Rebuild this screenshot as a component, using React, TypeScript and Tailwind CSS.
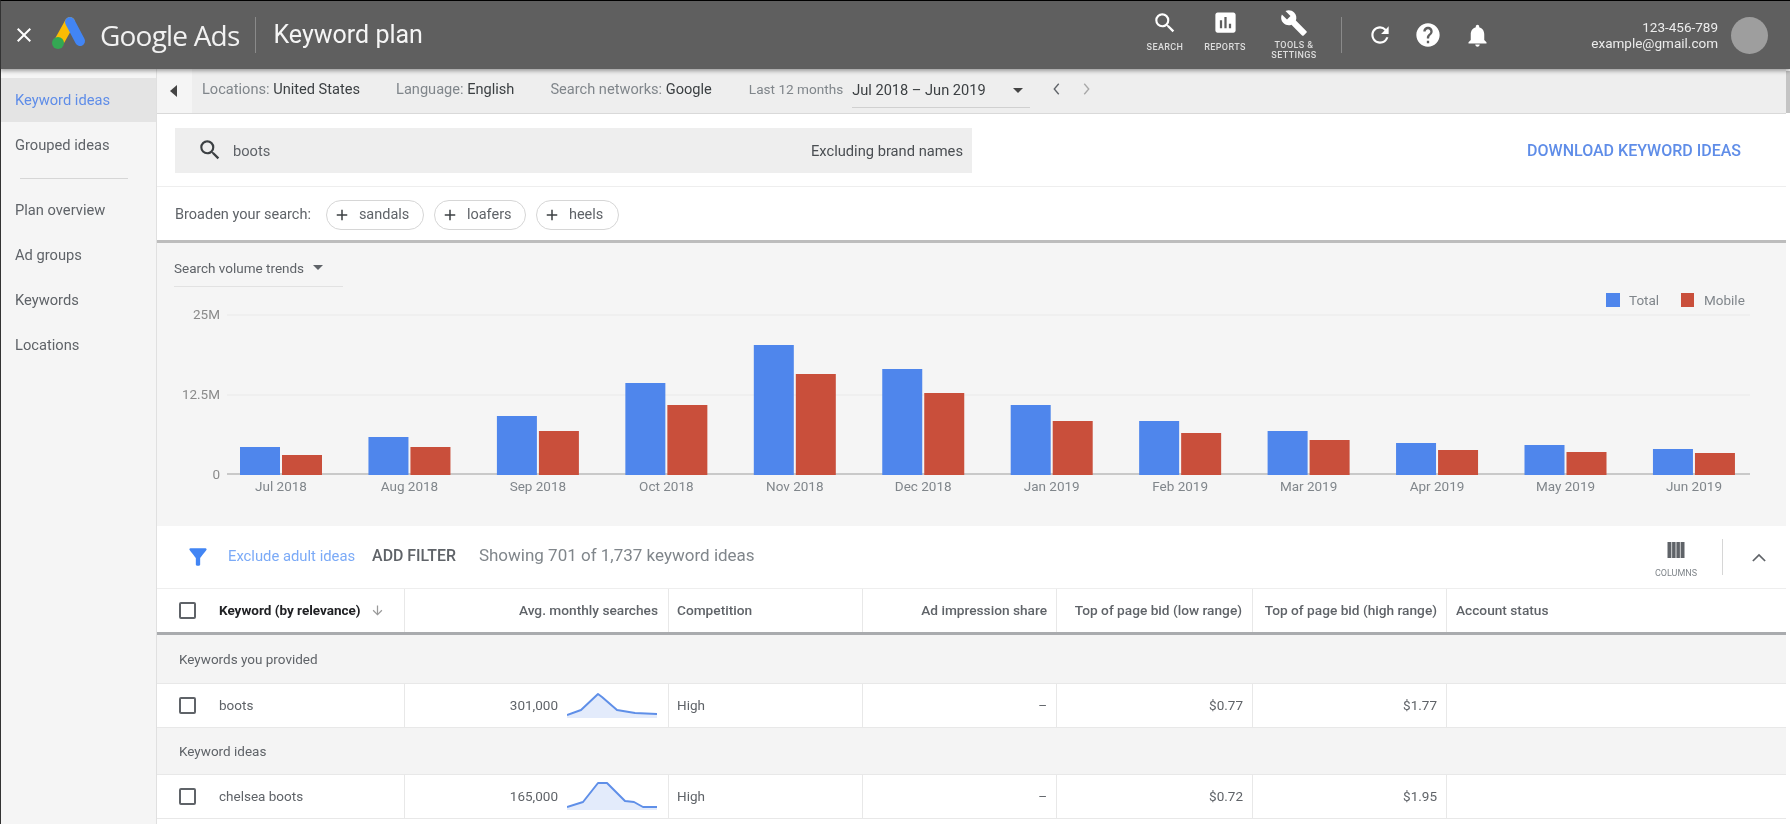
import { ReactNode } from 'react'

const blue = [447, 437, 416, 383, 345, 369, 405, 421, 431, 443, 445, 449]
const red = [455, 447, 431, 405, 374, 393, 421, 433, 440, 450, 452, 453]
const months = ['Jul 2018', 'Aug 2018', 'Sep 2018', 'Oct 2018', 'Nov 2018', 'Dec 2018', 'Jan 2019', 'Feb 2019', 'Mar 2019', 'Apr 2019', 'May 2019', 'Jun 2019']

const paths = {
  search: 'M15.5 14h-.79l-.28-.27A6.471 6.471 0 0 0 16 9.5 6.5 6.5 0 1 0 9.5 16c1.61 0 3.09-.59 4.23-1.57l.27.28v.79l5 4.99L20.49 19l-4.99-5zm-6 0C7.01 14 5 11.99 5 9.5S7.01 5 9.5 5 14 7.01 14 9.5 11.99 14 9.5 14z',
  reports: 'M19 3H5c-1.1 0-2 .9-2 2v14c0 1.1.9 2 2 2h14c1.1 0 2-.9 2-2V5c0-1.1-.9-2-2-2zM9 17H7v-7h2v7zm4 0h-2V7h2v10zm4 0h-2v-4h2v4z',
  tools: 'M22.7 19l-9.1-9.1c.9-2.3.4-5-1.5-6.9-2-2-5-2.4-7.4-1.3L9 6 6 9 1.6 4.7C.4 7.1.9 10.1 2.9 12.1c1.9 1.9 4.6 2.4 6.9 1.5l9.1 9.1c.4.4 1 .4 1.4 0l2.3-2.3c.5-.4.5-1.1.1-1.4z',
  refresh: 'M17.65 6.35A7.958 7.958 0 0 0 12 4c-4.42 0-7.99 3.58-7.99 8s3.57 8 7.99 8c3.73 0 6.84-2.55 7.73-6h-2.08A5.99 5.99 0 0 1 12 18c-3.31 0-6-2.69-6-6s2.69-6 6-6c1.66 0 3.14.69 4.22 1.78L13 11h7V4l-2.35 2.35z',
  help: 'M12 2C6.48 2 2 6.48 2 12s4.48 10 10 10 10-4.48 10-10S17.52 2 12 2zm1 17h-2v-2h2v2zm2.07-7.75l-.9.92C13.45 12.9 13 13.5 13 15h-2v-.5c0-1.1.45-2.1 1.17-2.83l1.24-1.26c.37-.36.59-.86.59-1.41 0-1.1-.9-2-2-2s-2 .9-2 2H8c0-2.21 1.79-4 4-4s4 1.79 4 4c0 .88-.36 1.68-.93 2.25z',
  bell: 'M12 22c1.1 0 2-.9 2-2h-4c0 1.1.89 2 2 2zm6-6v-5c0-3.07-1.64-5.64-4.5-6.32V4c0-.83-.67-1.5-1.5-1.5s-1.5.67-1.5 1.5v.68C7.63 5.36 6 7.92 6 11v5l-2 2v1h16v-1l-2-2z',
  funnel: 'M4.25 5.61C6.27 8.2 10 13 10 13v6c0 .55.45 1 1 1h2c.55 0 1-.45 1-1v-6s3.72-4.8 5.74-7.39A.998.998 0 0 0 18.95 4H5.04c-.83 0-1.3.95-.79 1.61z',
  plus: 'M19 13h-6v6h-2v-6H5v-2h6V5h2v6h6v2z',
  close: 'M19 6.41 17.59 5 12 10.59 6.41 5 5 6.41 10.59 12 5 17.59 6.41 19 12 13.41 17.59 19 19 17.59 13.41 12z',
  columns: 'M3.5 4h3.9v16H3.5zM8.1 4h3.5v16H8.1zM12.4 4h3.5v16h-3.5zM16.6 4h3.9v16h-3.9z',
  down: 'M11 4h2v12.2l5.3-5.3 1.4 1.4-7.7 7.7-7.7-7.7 1.4-1.4 5.3 5.3z',
}

function Icon({ d, className }: { d: keyof typeof paths; className: string }) {
  return (
    <svg viewBox="0 0 24 24" fill="currentColor" className={className}>
      <path d={paths[d]} />
    </svg>
  )
}

function NavAction({ icon, size, label, width, gap }: { icon: keyof typeof paths; size: string; label: ReactNode; width: string; gap: string }) {
  return (
    <div className={`flex h-[60px] flex-col items-center pt-[4px] ${width}`}>
      <div className="flex h-[27px] items-center justify-center">
        <Icon d={icon} className={`${size} text-white`} />
      </div>
      <div className={`text-center text-[9px] leading-[10px] font-medium tracking-[0.4px] text-[#dddddd] uppercase ${gap}`}>{label}</div>
    </div>
  )
}

function Header() {
  return (
    <header className="relative z-20 flex h-[69px] shrink-0 items-center border-t border-l border-t-black border-l-[#333333] bg-[#5f5f5f] shadow-[0_2px_4px_rgba(0,0,0,0.35)]">
      <Icon d="close" className="ml-[11px] h-[24px] w-[24px] text-white" />
      <svg viewBox="0 0 40 40" className="ml-[12px] h-[40px] w-[40px]">
        <line x1="22" y1="7" x2="12" y2="25" stroke="#fbbc04" strokeWidth="10" strokeLinecap="round" />
        <circle cx="10" cy="28" r="6" fill="#34a853" />
        <line x1="22" y1="7" x2="32" y2="26" stroke="#4285f4" strokeWidth="10" strokeLinecap="round" />
      </svg>
      <span className="ml-[12px] font-['Open_Sans'] text-[28px] tracking-[-0.8px] text-[#f1f1f1]">Google Ads</span>
      <div className="mr-[18px] ml-[15px] h-[36px] w-px bg-[#8a8a8a]" />
      <span className="font-['Roboto'] text-[25px] text-[#f5f5f5]">Keyword plan</span>

      <div className="ml-auto flex items-center">
        <NavAction icon="search" size="h-[26px] w-[26px]" label="Search" width="w-[60px]" gap="mt-[6px]" />
        <NavAction icon="reports" size="h-[27px] w-[27px]" label="Reports" width="w-[60px]" gap="mt-[6px]" />
        <NavAction icon="tools" size="h-[28px] w-[28px]" label={<>Tools &<br />Settings</>} width="w-[78px]" gap="mt-[4px]" />
        <div className="ml-[8px] h-[36px] w-px bg-[#8a8a8a]" />
        <Icon d="refresh" className="ml-[25px] h-[26px] w-[26px] text-white" />
        <Icon d="help" className="ml-[21px] h-[28px] w-[28px] text-white" />
        <Icon d="bell" className="ml-[22px] h-[27px] w-[27px] text-white" />
        <div className="ml-[81px] w-[146px] text-right text-[13.5px] leading-[16px] text-[#ececec]">
          <div>123-456-789</div>
          <div>example@gmail.com</div>
        </div>
        <div className="mr-[22px] ml-[13px] h-[37px] w-[37px] rounded-full bg-[#9e9e9e]" />
      </div>
    </header>
  )
}

function Sidebar() {
  return (
    <aside className="w-[156px] shrink-0 border-l border-l-[#333333] bg-[#f5f5f5] pt-[9px] text-[14.7px] text-[#5f6368]">
      <div className="flex h-[44px] items-center bg-[#e4e4e4] pl-[14px] text-[#5f8de8]">Keyword ideas</div>
      <div className="flex h-[46px] items-center pl-[14px]">Grouped ideas</div>
      <div className="mt-[10px] mr-[28px] mb-[9px] ml-[19px] h-px bg-[#d6d6d6]" />
      <div className="flex h-[45px] items-center pl-[14px]">Plan overview</div>
      <div className="flex h-[45px] items-center pl-[14px]">Ad groups</div>
      <div className="flex h-[45px] items-center pl-[14px]">Keywords</div>
      <div className="flex h-[45px] items-center pl-[14px]">Locations</div>
    </aside>
  )
}

function Label({ name, value }: { name: string; value: string }) {
  return (
    <span className="text-[#80868b]">
      {name} <span className="text-[#3c4043]">{value}</span>
    </span>
  )
}

function SubBar() {
  return (
    <div className="flex h-[45px] items-center border-b border-[#d9d9d9] bg-[#eeeeee] text-[14.6px]">
      <div className="flex h-full w-[35px] items-center justify-center bg-[#f5f5f5] pr-[2px]">
        <div className="h-0 w-0 border-y-[6px] border-r-[7px] border-y-transparent border-r-[#444444]" />
      </div>
      <div className="ml-[10px] flex items-center gap-[36px] pb-[3px]">
        <Label name="Locations:" value="United States" />
        <Label name="Language:" value="English" />
        <Label name="Search networks:" value="Google" />
      </div>
      <span className="ml-[37px] pb-[3px] text-[13.6px] text-[#80868b]">Last 12 months</span>
      <div className="ml-[9px] flex h-[34px] w-[178px] items-center justify-between border-b border-[#d0d0d0] pr-[7px] text-[#3c4043]">
        <span>Jul 2018 – Jun 2019</span>
        <div className="h-0 w-0 border-x-[5px] border-t-[5px] border-x-transparent border-t-[#444444]" />
      </div>
      <svg viewBox="0 0 10 16" className="mb-[4px] ml-[22px] h-[12px] w-[9px]" fill="none" stroke="#5f6368" strokeWidth="1.8">
        <path d="M8 1 2 8l6 7" />
      </svg>
      <svg viewBox="0 0 10 16" className="mb-[4px] ml-[21px] h-[12px] w-[9px]" fill="none" stroke="#a8a8a8" strokeWidth="1.8">
        <path d="M2 1l6 7-6 7" />
      </svg>
    </div>
  )
}

function SearchBar() {
  return (
    <div className="flex h-[73px] items-center border-b border-[#eeeeee] bg-white pr-[45px] pl-[18px]">
      <div className="flex h-[45px] w-[797px] items-center bg-[#eeeeee] pr-[9px] pl-[22px] text-[14.7px] text-[#5f6368]">
        <Icon d="search" className="h-[26px] w-[26px] text-[#3c4043]" />
        <span className="ml-[10px] pt-[2px]">boots</span>
        <span className="ml-auto pt-[2px] text-[#4a4e52]">Excluding brand names</span>
      </div>
      <span className="ml-auto pt-[1px] text-[16px] font-medium text-[#5f8de8]">DOWNLOAD KEYWORD IDEAS</span>
    </div>
  )
}

function Chip({ label, width }: { label: string; width: string }) {
  return (
    <div className={`flex h-[30px] items-center rounded-full border border-[#d6d6d6] pl-[6px] text-[14.5px] text-[#5f6368] ${width}`}>
      <Icon d="plus" className="h-[18px] w-[18px] text-[#3c4043]" />
      <span className="ml-[8px]">{label}</span>
    </div>
  )
}

function Broaden() {
  return (
    <div className="flex h-[56px] items-center gap-[10px] border-b-[3px] border-[#bdbdbd] bg-white pt-[2px] pl-[18px] text-[14.5px] text-[#5f6368]">
      <span className="mr-[5px]">Broaden your search:</span>
      <Chip label="sandals" width="w-[98px]" />
      <Chip label="loafers" width="w-[92px]" />
      <Chip label="heels" width="w-[83px]" />
    </div>
  )
}

function Chart() {
  const top = 243
  const left = 157
  return (
    <div className="h-[283px] bg-[#f5f5f5]">
      <svg viewBox={`${left} ${top} 1629 283`} className="block h-[283px] w-[1629px] font-['Roboto']">
        <line x1="227" x2="1750" y1="315" y2="315" stroke="#ececec" strokeWidth="1.5" />
        <line x1="227" x2="1750" y1="395" y2="395" stroke="#ececec" strokeWidth="1.5" />
        <line x1="227" x2="1750" y1="474" y2="474" stroke="#c9c9c9" strokeWidth="2" />
        <text x="220" y="319" textAnchor="end" fontSize="13.5" fill="#8a8a8a">25M</text>
        <text x="220" y="399" textAnchor="end" fontSize="13.5" fill="#8a8a8a">12.5M</text>
        <text x="220" y="479" textAnchor="end" fontSize="13.5" fill="#8a8a8a">0</text>
        {months.map((m, i) => {
          const x = 240 + i * 128.45
          return (
            <g key={m}>
              <rect x={x} y={blue[i]} width="40" height={475 - blue[i]} fill="#4f86ec" />
              <rect x={x + 42} y={red[i]} width="40" height={475 - red[i]} fill="#c94f3b" />
              <text x={x + 41} y="491" textAnchor="middle" fontSize="13.5" fill="#80868b">{m}</text>
            </g>
          )
        })}
        <rect x="1606" y="293" width="14" height="14" fill="#4f86ec" />
        <text x="1629" y="305" fontSize="13.5" fill="#80868b">Total</text>
        <rect x="1681" y="293" width="13" height="14" fill="#c94f3b" />
        <text x="1704" y="305" fontSize="13.5" fill="#80868b">Mobile</text>
      </svg>
    </div>
  )
}

function ChartWrap() {
  return (
    <div className="relative">
      <div className="absolute top-[15px] left-[17px] flex h-[29px] w-[169px] items-start gap-[9px] border-b border-[#e2e2e2] text-[13.5px] text-[#5f6368]">
        <span>Search volume trends</span>
        <div className="mt-[7px] h-0 w-0 border-x-[5px] border-t-[5px] border-x-transparent border-t-[#5f6368]" />
      </div>
      <Chart />
    </div>
  )
}

function FilterRow() {
  return (
    <div className="flex h-[62px] items-center bg-white pl-[28px]">
      <Icon d="funnel" className="h-[26px] w-[26px] text-[#4285f4]" />
      <span className="ml-[17px] pb-[2px] text-[14.8px] text-[#7baaf7]">Exclude adult ideas</span>
      <span className="ml-[17px] pb-[2px] text-[15.9px] font-medium text-[#5f6368]">ADD FILTER</span>
      <span className="ml-[23px] pb-[2px] text-[17px] text-[#80868b]">Showing 701 of 1,737 keyword ideas</span>
      <div className="ml-auto flex h-full items-center">
        <div className="flex w-[46px] flex-col items-center pt-[2px]">
          <Icon d="columns" className="h-[24px] w-[24px] text-[#5f6368]" />
          <span className="mt-[5px] text-[9px] leading-[12px] text-[#80868b]">COLUMNS</span>
        </div>
        <div className="ml-[23px] h-[36px] w-px bg-[#d6d6d6]" />
        <svg viewBox="0 0 16 10" className="mr-[20px] ml-[29px] h-[9px] w-[14px]" fill="none" stroke="#5f6368" strokeWidth="2">
          <path d="M1 9l7-7 7 7" />
        </svg>
      </div>
    </div>
  )
}

const cols = 'grid grid-cols-[248px_264px_194px_194px_196px_194px_339px]'
const cell = 'flex items-center border-r border-[#e8e8e8] px-[9px] last:border-r-0'

function Check() {
  return <div className="h-[17px] w-[17px] shrink-0 rounded-[2px] border-2 border-[#5f6368]" />
}

function TableHead() {
  return (
    <div className={`${cols} h-[47px] border-t border-b-[3px] border-t-[#eeeeee] border-b-[#a9abae] bg-white text-[13.7px] font-medium text-[#5f6368]`}>
      <div className={`${cell} pl-[22px] text-[#202124]`}>
        <Check />
        <span className="ml-[23px] text-[13.5px] font-bold">Keyword (by relevance)</span>
        <Icon d="down" className="ml-[9px] h-[15px] w-[15px] text-[#9a9a9a]" />
      </div>
      <div className={`${cell} justify-end pr-[10px]`}>Avg. monthly searches</div>
      <div className={`${cell} pl-[8px]`}>Competition</div>
      <div className={`${cell} justify-end`}>Ad impression share</div>
      <div className={`${cell} justify-end pr-[10px]`}>Top of page bid (low range)</div>
      <div className={`${cell} justify-end`}>Top of page bid (high range)</div>
      <div className={cell}>Account status</div>
    </div>
  )
}

function Group({ title, height }: { title: string; height: string }) {
  return (
    <div className={`flex items-center bg-[#f4f4f4] pl-[22px] text-[13.5px] text-[#5f6368] ${height}`}>{title}</div>
  )
}

function Spark({ line, bottom }: { line: [number, number][]; bottom: number }) {
  const pts = line.map(p => p.join(',')).join(' ')
  const area = `0,${bottom} ${pts} 90,${bottom}`
  return (
    <svg viewBox="0 0 90 30" className="ml-[9px] h-[30px] w-[90px] shrink-0">
      <polygon points={area} fill="#e3ebfb" />
      <polyline points={pts} fill="none" stroke="#5f8fe8" strokeWidth="2" strokeLinejoin="round" />
    </svg>
  )
}

function Row({ name, searches, line, bottom, low, high }: { name: string; searches: string; line: [number, number][]; bottom: number; low: string; high: string }) {
  return (
    <div className={`${cols} h-[45px] border-y border-[#e8e8e8] bg-white text-[13.5px] text-[#5f6368]`}>
      <div className={`${cell} pl-[22px]`}>
        <Check />
        <span className="ml-[23px]">{name}</span>
      </div>
      <div className={`${cell} justify-end pr-[11px]`}>
        {searches}
        <Spark line={line} bottom={bottom} />
      </div>
      <div className={`${cell} pl-[8px]`}>High</div>
      <div className={`${cell} justify-end`}>–</div>
      <div className={`${cell} justify-end`}>{low}</div>
      <div className={`${cell} justify-end`}>{high}</div>
      <div className={cell} />
    </div>
  )
}

export default function App() {
  return (
    <div className="flex h-[824px] w-[1790px] flex-col overflow-hidden bg-white font-['Roboto',sans-serif] blur-[0.7px]">
      <Header />
      <div className="flex min-h-0 flex-1">
        <Sidebar />
        <main className="w-[1630px] border-l border-[#e0e0e0]">
          <SubBar />
          <SearchBar />
          <Broaden />
          <ChartWrap />
          <FilterRow />
          <TableHead />
          <Group title="Keywords you provided" height="h-[48px]" />
          <Row
            name="boots"
            searches="301,000"
            line={[[0, 24], [14, 19], [31, 3], [35, 6], [50, 19], [68, 22], [90, 23]]}
            bottom={27}
            low="$0.77"
            high="$1.77"
          />
          <Group title="Keyword ideas" height="h-[46px]" />
          <Row
            name="chelsea boots"
            searches="165,000"
            line={[[0, 25], [16, 20], [31, 1], [40, 1], [58, 19], [67, 20], [76, 25], [90, 25]]}
            bottom={28}
            low="$0.72"
            high="$1.95"
          />
          <div className="h-[10px] bg-white" />
        </main>
        <div className="w-[4px] pt-[2px]">
          <div className="h-[42px] bg-[#c4c4c4]" />
        </div>
      </div>
    </div>
  )
}
